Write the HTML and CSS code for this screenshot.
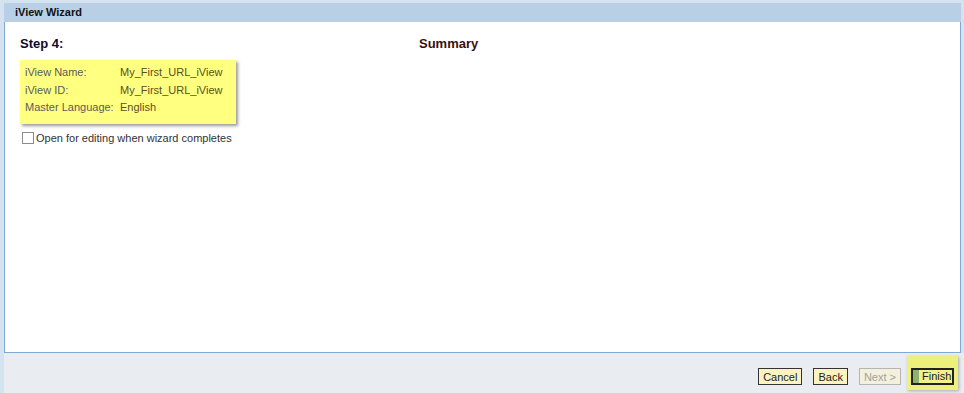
FILE: index.html
```html
<!DOCTYPE html>
<html lang="en">
<head>
    <title>iView Wizard</title>
    <link rel="stylesheet" href="styles.css">
</head>
<body>
    <div class="wizard">
        <div class="title">iView Wizard</div>
        <div class="panel">
            <div class="heads">
                <h2 class="step">Step 4:</h2>
                <h2 class="summary">Summary</h2>
            </div>
            <div class="info">
                <div class="row"><span class="lbl">iView Name:</span><span>My_First_URL_iView</span></div>
                <div class="row"><span class="lbl">iView ID:</span><span>My_First_URL_iView</span></div>
                <div class="row"><span class="lbl">Master Language:</span><span>English</span></div>
            </div>
            <label class="check"><span class="box"></span>Open for editing when wizard completes</label>
        </div>
        <div class="footer">
            <button class="btn">Cancel</button>
            <button class="btn">Back</button>
            <button class="btn disabled">Next &gt;</button>
            <div class="focus">
                <button class="btn finish"><span class="bar"></span>Finish</button>
            </div>
        </div>
    </div>
</body>
</html>
```

FILE: styles.css
```css
html, body {
    margin: 0;
    height: 100%;
}
body {
    background-color: #d5e2f0;
    font-family: "Liberation Sans", Arial, sans-serif;
    font-size: 11px;
    color: #222;
}
.wizard {
    display: flex;
    flex-direction: column;
    height: 390px;
    margin: 3px 0 0 4px;
}
.title {
    background-color: #b8cfe5;
    height: 19px;
    line-height: 19px;
    padding-left: 11px;
    margin-right: 3px;
    font-weight: bold;
    color: #111;
}
.panel {
    background-color: #fff;
    border: 1px solid #80a9d2;
    border-top: none;
    height: 330px;
    margin-right: 3px;
    padding: 0 15px;
}
.heads {
    display: flex;
    padding-top: 15px;
    height: 23px;
}
.heads h2 {
    margin: 0;
    font-size: 13px;
    font-weight: bold;
    line-height: 14px;
}
.step {
    width: 399px;
    color: #0b0b2a;
}
.summary {
    color: #3b0f0f;
}
.info {
    background-color: #ffff80;
    box-shadow: 2px 2px 3px #999;
    width: 211px;
    padding: 4px 0 7px 5px;
}
.row {
    display: flex;
    height: 17.5px;
    line-height: 17px;
    color: #5a4f20;
    white-space: nowrap;
}
.lbl {
    color: #5b5b5b;
    width: 95px;
}
.check {
    display: flex;
    align-items: center;
    margin: 8px 0 0 2px;
    color: #333;
}
.box {
    width: 10px;
    height: 10px;
    border: 1px solid #8d8d8d;
    background: #fff;
    margin-right: 2px;
}
.footer {
    flex: 1;
    background-color: #e9edf1;
    display: flex;
    justify-content: flex-end;
    align-items: flex-start;
    gap: 11px;
    padding-right: 6px;
}
.btn {
    font-family: inherit;
    font-size: 11px;
    height: 17px;
    padding: 0 4px;
    border: 1px solid #333;
    background-color: #fcf3c0;
    color: #222;
    margin-top: 15px;
}
.btn.disabled {
    border-color: #b5b5b5;
    background-color: #f3f0dd;
    color: #a0a0a0;
}
.focus {
    background-color: #edf07b;
    box-shadow: 1px 1px 3px #aaa;
    padding: 12px 4px 5px 4px;
    margin: 3px 0 0 -5px;
}
.btn.finish {
    margin: 0;
    background-color: #f2f18a;
    border: 2px solid #222;
    height: 17px;
    width: 43px;
    display: flex;
    align-items: stretch;
    padding: 0;
    line-height: 13px;
    overflow: hidden;
}
.bar {
    flex: none;
    width: 6px;
    background-color: #8db26d;
    margin-right: 3px;
}
```
